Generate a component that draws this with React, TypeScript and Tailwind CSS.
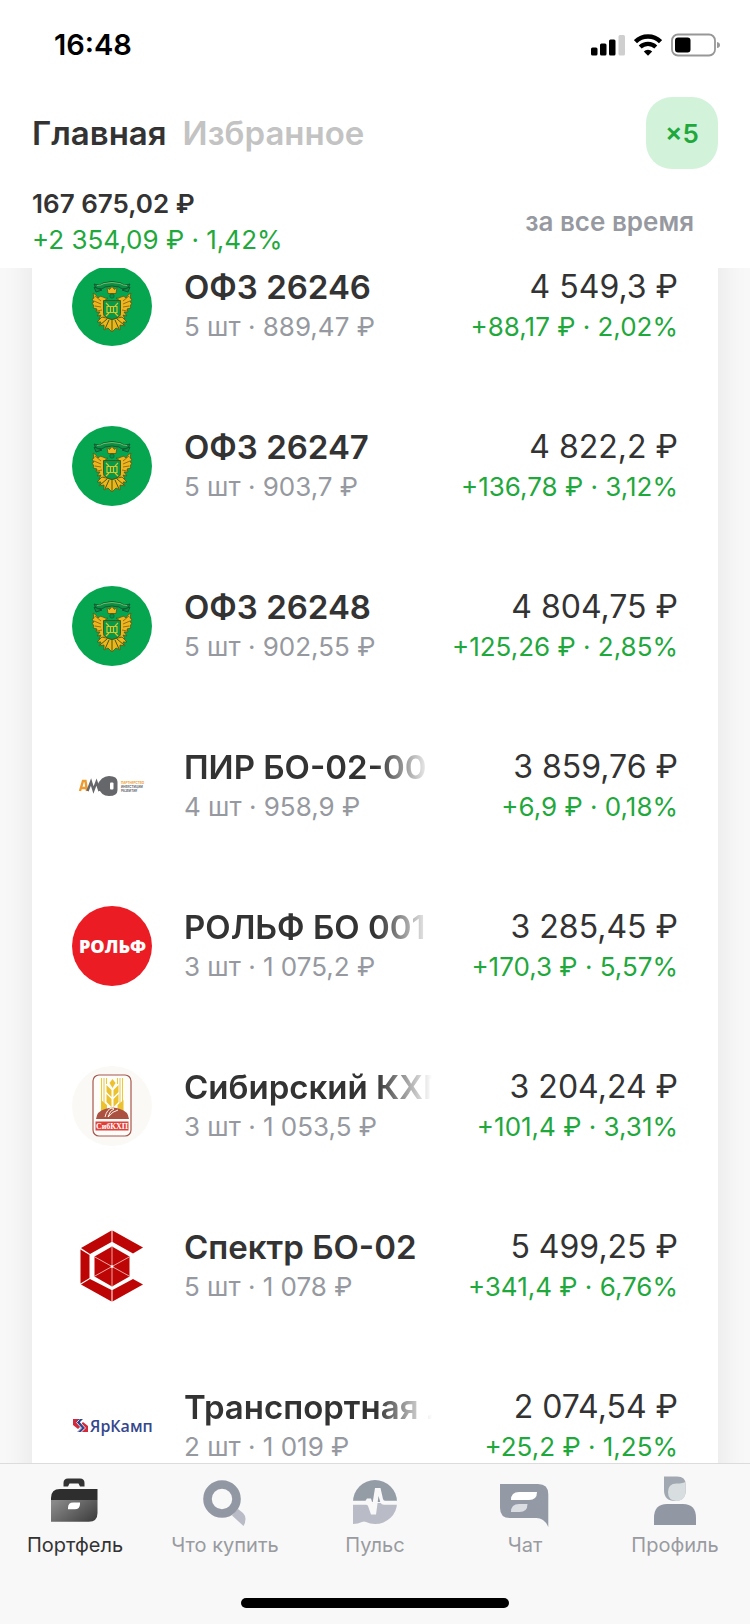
import type { ReactNode } from "react";

function TreasuryLogo() {
  return (
    <svg viewBox="0 0 80 80" className="size-20" aria-hidden="true">
      <circle cx="40" cy="40" r="40" fill="#06a650" />
      <g stroke="#12522c" strokeWidth="0.9" fill="#0b8f45">
        <path d="M22 18q6 2 9-1q9-3 18 0q3 3 9 1l-2 4q-6 2-9-1q-7-2-14 0q-3 3-9 1z" />
        <path d="M22 21l8 3-6 2zM58 21l-8 3 6 2z" />
      </g>
      <path d="M25 19.500q4 0 7-2q8-2 16 0q3 2 7 2" stroke="#8bc878" strokeWidth="0.8" fill="none" />
      <g fill="#f0b41c" stroke="#4d5a18" strokeWidth="0.8">
        <path d="M35 21.500l2.500 2 2.500-3 2.500 3 2.500-2-1 6h-8z" />
        <path d="M36 32q-2 1-5-1-3-2-5 1-2-4-5-5l1 5-2 1 2 3-2 1 2 3-1 2 4 1-1 3 4 0-3 4 4-1-2 4 5-2 0 3q3 0 4-2l-4-5v-12z" />
        <path d="M44 32q2 1 5-1 3-2 5 1 2-4 5-5l-1 5 2 1-2 3 2 1-2 3 1 2-4 1 1 3-4 0 3 4-4-1 2 4-5-2 0 3q-3 0-4-2l4-5v-12z" />
        <path d="M38 53l-8-2-5 5 4 0-2 4 5-1 0 5 4-2 4 4 4-4 4 2 0-5 5 1-2-4 4 0-5-5-8 2z" />
      </g>
      <path d="M31.500 34.500h17v13q0 4-8.500 6q-8.500-2-8.500-6z" fill="#07994a" stroke="#3d5c17" strokeWidth="1" />
      <g fill="none">
        <path
          d="M34 37l3 3M46 37l-3 3M34 50l3-3M46 50l-3-3M35 40.500h10v6H35zM38.500 40v7M41.500 40v7"
          stroke="#d9c527"
          strokeWidth="1.200"
        />
        <path
          d="M23 30l6 5M22 35l7 3M23 40l6 1M25 45l5-1M57 30l-6 5M58 35l-7 3M57 40l-6 1M55 45l-5-1"
          stroke="#75611a"
          strokeWidth="0.800"
        />
        <path d="M40 53v12M37 54l-4 9M43 54l4 9M35 53l-7 6M45 53l7 6" stroke="#3c5c17" strokeWidth="1" />
      </g>
      <circle cx="40" cy="30" r="2.200" fill="#0b8f45" stroke="#12522c" strokeWidth="0.6" />
    </svg>
  );
}

function PirLogo() {
  return (
    <svg viewBox="0 0 80 80" className="size-20" aria-hidden="true">
      <path d="M8 45l3-10h2.500l1.500 10M9.500 42h5" stroke="#ef9a2e" strokeWidth="2.400" fill="none" />
      <path d="M15.500 45l3.500-9 2.500 8 3-8 3 9" stroke="#66676b" strokeWidth="2.400" fill="none" />
      <path d="M25 40q4-10 12-10q8.500 0 8.500 6v8q0 6-8.500 6q-8 0-12-10z" fill="#66676b" />
      <rect x="38" y="36.500" width="3.500" height="7" rx="1" fill="#fff" />
      <g fontFamily="Inter, sans-serif" fontWeight="700" fontSize="3">
        <text x="49" y="38" fill="#ef9a2e">ПАРТНЕРСТВО</text>
        <text x="49" y="41.800" fill="#66676b">ИНВЕСТИЦИИ</text>
        <text x="49" y="45.600" fill="#66676b">РАЗВИТИЕ</text>
      </g>
    </svg>
  );
}

function RolfLogo() {
  return (
    <svg viewBox="0 0 80 80" className="size-20" aria-hidden="true">
      <circle cx="40" cy="40" r="40" fill="#ec1c24" />
      <text x="40.500" y="46.500" textAnchor="middle" fill="#fff" fontFamily="'Open Sans', sans-serif" fontWeight="800" fontSize="18">
        РОЛЬФ
      </text>
    </svg>
  );
}

function SibirskyLogo() {
  return (
    <svg viewBox="0 0 80 80" className="size-20" aria-hidden="true">
      <circle cx="40" cy="40" r="40" fill="#fbf9f5" />
      <rect x="21" y="9" width="38" height="61" rx="6" fill="#fffdfa" stroke="#a6574c" strokeWidth="1.200" />
      <g stroke="#ecc93b" strokeWidth="1" fill="none">
        <path d="M29.500 12v32M32 12v34M48 12v34M50.500 12v32M34.500 12v6M45.500 12v6" />
      </g>
      <g fill="#ebc22e">
        <path d="M40.500 13l3 4-3 5-3-5z" />
        <path d="M34.500 19l5 5v7l-5-5zM46.500 19l-5 5v7l5-5z" />
        <path d="M34.500 28l5 5v8l-5-5zM46.500 28l-5 5v8l5-5z" />
        <path d="M29 34l6 5v6h-6zM51.500 34l-6 5v6h6z" />
      </g>
      <path d="M24 53q1-8 9-10q8-3 15 0q8 2 9 10z" fill="#ab5142" />
      <path d="M33 51q2-8 7-9l2 1q-4 1-6 8q5-6 10-7" stroke="#fff6e8" strokeWidth="1" fill="none" />
      <rect x="23.500" y="55.500" width="33" height="9" fill="#df4038" />
      <text x="40" y="62.700" textAnchor="middle" fill="#fff" fontFamily="'Liberation Serif', serif" fontWeight="700" fontSize="8">
        СибКХП
      </text>
    </svg>
  );
}

function SpectrLogo() {
  return (
    <svg viewBox="0 0 80 80" className="size-20" aria-hidden="true">
      <g fill="#bd0505">
        <path d="M39.500 4.500v11.500L18 28 9 22z" />
        <path d="M40.500 4.500v11.500L61 27.500 71 21.500z" />
        <path d="M8.500 23.500l9 5.500v23l-9 5.500z" />
        <path d="M39.500 75.500v-11.500L18 53 9 58.500z" />
        <path d="M40.500 75.500v-11.500L61 53 71 58.500z" />
        <path d="M40 20.500l17.500 10v20L40 60.500l-17.500-10v-20z" />
      </g>
      <path d="M40 20v41M22 30.500l36 20M58 30.500l-36 20" stroke="#f3b9b5" strokeWidth="0.900" fill="none" />
      <circle cx="40" cy="40.500" r="1.300" fill="#fff" />
    </svg>
  );
}

function YarkampLogo() {
  return (
    <svg viewBox="0 0 80 80" className="size-20" aria-hidden="true">
      <path d="M1 33h7l-3 3 4 4-3 3-5-4z" fill="#d22a3c" />
      <path d="M16 46H9l3-3-4-4 3-3 5 4z" fill="#d22a3c" />
      <path d="M7 33h4l-3 3 5 6-4 4H5l4-4-5-6z" fill="#35478c" />
      <path d="M7.500 33.500l-3 3 5 5.500-4 4M11.500 33.500l-3 3 5 5.500-4 4" stroke="#fff" strokeWidth="0.800" fill="none" />
      <text x="18" y="46" fill="#35478c" fontFamily="'Open Sans', sans-serif" fontWeight="600" fontSize="16">
        ЯрКамп
      </text>
    </svg>
  );
}

type Holding = {
  name: string;
  detail: string;
  price: string;
  change: string;
  logo: ReactNode;
  faded?: boolean;
};

const holdings: Holding[] = [
  { name: "ОФЗ 26246", detail: "5 шт · 889,47 ₽", price: "4 549,3 ₽", change: "+88,17 ₽ · 2,02%", logo: <TreasuryLogo /> },
  { name: "ОФЗ 26247", detail: "5 шт · 903,7 ₽", price: "4 822,2 ₽", change: "+136,78 ₽ · 3,12%", logo: <TreasuryLogo /> },
  { name: "ОФЗ 26248", detail: "5 шт · 902,55 ₽", price: "4 804,75 ₽", change: "+125,26 ₽ · 2,85%", logo: <TreasuryLogo /> },
  { name: "ПИР БО-02-00", detail: "4 шт · 958,9 ₽", price: "3 859,76 ₽", change: "+6,9 ₽ · 0,18%", logo: <PirLogo />, faded: true },
  { name: "РОЛЬФ БО 001", detail: "3 шт · 1 075,2 ₽", price: "3 285,45 ₽", change: "+170,3 ₽ · 5,57%", logo: <RolfLogo />, faded: true },
  { name: "Сибирский КХП", detail: "3 шт · 1 053,5 ₽", price: "3 204,24 ₽", change: "+101,4 ₽ · 3,31%", logo: <SibirskyLogo />, faded: true },
  { name: "Спектр БО-02", detail: "5 шт · 1 078 ₽", price: "5 499,25 ₽", change: "+341,4 ₽ · 6,76%", logo: <SpectrLogo /> },
  { name: "Транспортная Л", detail: "2 шт · 1 019 ₽", price: "2 074,54 ₽", change: "+25,2 ₽ · 1,25%", logo: <YarkampLogo />, faded: true },
];

function HoldingRow({ name, detail, price, change, logo, faded }: Holding) {
  return (
    <li className="flex h-40 items-center pr-10 pl-10">
      <div className="mr-8 shrink-0">{logo}</div>
      <div className="min-w-0 flex-1 pt-[2px]">
        <h2
          className={
            faded
              ? "overflow-hidden text-[33px] leading-10 font-semibold whitespace-nowrap [mask-image:linear-gradient(to_left,transparent,black_56px)]"
              : "text-[33px] leading-10 font-semibold whitespace-nowrap"
          }
        >
          {name}
        </h2>
        <p className="text-[26px] leading-10 whitespace-nowrap text-[#9699a0]">{detail}</p>
      </div>
      <div className="w-[246px] shrink-0 pt-[2px] text-right whitespace-nowrap">
        <p className="text-[32px] leading-10">{price}</p>
        <p className="text-[26px] leading-10 text-[#1fa83c]">{change}</p>
      </div>
    </li>
  );
}

function PortfolioIcon() {
  return (
    <svg viewBox="0 0 52 52" className="size-[52px]" aria-hidden="true">
      <defs>
        <linearGradient id="case" x1="0" y1="0.200" x2="1" y2="0.800">
          <stop offset="0" stopColor="#898989" />
          <stop offset="1" stopColor="#404040" />
        </linearGradient>
      </defs>
      <path d="M14.500 10.500V7q0-4.500 4.500-4.500h12q4.500 0 4.500 4.500v3.500h-4.500l-1.500-3h-9l-1.500 3z" fill="#333" />
      <path d="M2 24v-2q0-9 9-9h37.500v11z" fill="#2e2e2e" />
      <path d="M2 24h46.500v13q0 8.700-8.700 8.700H2z" fill="url(#case)" />
      <path d="M19 33.300v-1.500q0-5.300 5.300-5.300H31v1.500q0 5.300-5.300 5.300z" fill="#fff" />
    </svg>
  );
}

function SearchIcon() {
  return (
    <svg viewBox="0 0 52 52" className="size-[52px]" aria-hidden="true">
      <path d="M39 33l5 4q2.500 2.500 2.500 6t-2 7L33 39.500z" fill="#b9bcc6" />
      <circle cx="23" cy="23" r="14.500" fill="none" stroke="#9298a3" strokeWidth="8.600" />
    </svg>
  );
}

function PulseIcon() {
  return (
    <svg viewBox="0 0 52 52" className="size-[52px]" aria-hidden="true">
      <path d="M4 26a22 22 0 0 1 44 0z" fill="#949ca6" />
      <path d="M4 27h44a22 21 0 0 1-22 21q-5 0-9-2q-2-1-4 0q-4 2-9 2z" fill="#b9bcc6" />
      <path
        d="M3 24.700h13.500l1.500-2.200h4l1.500 5L26 12h5.500l2.500 11q.5 1.700 2 1.700H49v4H35q-2.500 0-3.500-2L29.500 20 27 38.500h-5l-3-8.500q-.5-1.300-2-1.300H3z"
        fill="#f8f8f8"
      />
    </svg>
  );
}

function ChatIcon() {
  return (
    <svg viewBox="0 0 52 52" className="size-[52px]" aria-hidden="true">
      <path d="M1 8h38q10.300 0 10.300 10.300V51q-4-9-12-9H11Q1 42 1 32z" fill="#939aa5" />
      <path d="M12 24q0-8 8-8h18q0 8-8 8z" fill="#fff" />
      <path d="M12 36q0-8 8-8h8.500q0 8-8 8z" fill="#dadde1" />
    </svg>
  );
}

function ProfileIcon() {
  return (
    <svg viewBox="0 0 52 52" className="size-[52px]" aria-hidden="true">
      <path d="M15 .5h13q8.700 0 8.700 8v5.500q0 11-10.800 11T15 14z" fill="#a1a8b1" />
      <path d="M19 16q0-8.500 8.500-8.500 7 0 9.200-2V14q0 11-9.500 11Q19 24.500 19 16z" fill="#d8dddf" />
      <path d="M5 49v-7q0-14 13-14h16q13 0 13 14v7z" fill="#9197a3" />
    </svg>
  );
}

const tabs = [
  { label: "Портфель", icon: <PortfolioIcon />, active: true },
  { label: "Что купить", icon: <SearchIcon />, active: false },
  { label: "Пульс", icon: <PulseIcon />, active: false },
  { label: "Чат", icon: <ChatIcon />, active: false },
  { label: "Профиль", icon: <ProfileIcon />, active: false },
];

function StatusBar() {
  return (
    <div className="flex h-[88px] items-center justify-between pt-[2px] pr-[30px] pl-[54px]">
      <time className="text-[29px] leading-8 font-semibold text-black">16:48</time>
      <div className="flex items-center gap-[9px]">
        <svg viewBox="0 0 34 22" className="h-[22px] w-[34px]" aria-hidden="true">
          <rect x="0" y="13.500" width="6.500" height="8" rx="1.500" />
          <rect x="9" y="9.500" width="6.500" height="12" rx="1.500" />
          <rect x="18" y="5.500" width="6.500" height="16" rx="1.500" />
          <rect x="27.500" y="1" width="6.500" height="20.500" rx="1.500" fill="#cfcfcf" />
        </svg>
        <svg viewBox="0 0 28 22" className="h-[22px] w-7" aria-hidden="true">
          <path d="M1.500 7.700a17.800 17.800 0 0 1 25 0" fill="none" stroke="#000" strokeWidth="4.400" />
          <path d="M6.200 13a11.300 11.300 0 0 1 15.600 0" fill="none" stroke="#000" strokeWidth="4.200" />
          <path d="M14 21.700l-4.200-4.200a5.900 5.900 0 0 1 8.400 0z" />
        </svg>
        <svg viewBox="0 0 49 24" className="h-6 w-[49px]" aria-hidden="true">
          <rect x="1" y="1.500" width="43" height="21" rx="6" fill="#fff" stroke="#979797" strokeWidth="1.800" />
          <rect x="4" y="4.500" width="15.500" height="15" rx="3" />
          <path d="M46 9q3 .5 3 3t-3 3z" fill="#999" />
        </svg>
      </div>
    </div>
  );
}

export default function App() {
  return (
    <div className="flex h-screen flex-col overflow-hidden bg-[#f9f9f9] font-[Inter,sans-serif] text-[#333]">
      <header className="relative z-10 h-[268px] shrink-0 bg-white">
        <StatusBar />
        <div className="flex items-center justify-between pt-[9px] pr-8 pl-8">
          <nav className="flex gap-4 text-[33px] leading-10 font-semibold" aria-label="Разделы">
            <a href="#main">Главная</a>
            <a href="#favorites" className="text-[#c3c3c3]">
              Избранное
            </a>
          </nav>
          <button type="button" className="size-[72px] rounded-[26px] bg-[#d2f2d9] text-[26px] font-semibold text-[#1fa83c]">
            ×5
          </button>
        </div>
        <div className="flex items-center justify-between pt-[17px] pr-14 pl-8">
          <div className="text-[26px] leading-9">
            <p className="font-semibold">167 675,02 ₽</p>
            <p className="text-[#1fa83c]">+2 354,09 ₽ · 1,42%</p>
          </div>
          <button type="button" className="text-[26px] leading-9 font-semibold text-[#9699a0]">
            за все время
          </button>
        </div>
      </header>

      <main className="min-h-0 flex-1 overflow-hidden">
        <ul className="-mt-[42px] mr-8 ml-8 bg-white shadow-[0_0_36px_rgba(0,0,0,0.09)]">
          {holdings.map((holding) => (
            <HoldingRow key={holding.name} {...holding} />
          ))}
        </ul>
      </main>

      <footer className="relative z-10 flex shrink-0 flex-col items-center border-t border-[#dcdcdc] bg-[#f8f8f8] pb-4">
        <nav className="grid w-full grid-cols-5 pt-3" aria-label="Меню">
          {tabs.map((tab) => (
            <a
              key={tab.label}
              href="#tab"
              className={tab.active ? "flex flex-col items-center gap-1 text-[#333]" : "flex flex-col items-center gap-1 text-[#999ba1]"}
            >
              {tab.icon}
              <span className="text-xl leading-[26px]">{tab.label}</span>
            </a>
          ))}
        </nav>
        <div className="mt-10 h-[10px] w-[268px] rounded-full bg-black" />
      </footer>
    </div>
  );
}
